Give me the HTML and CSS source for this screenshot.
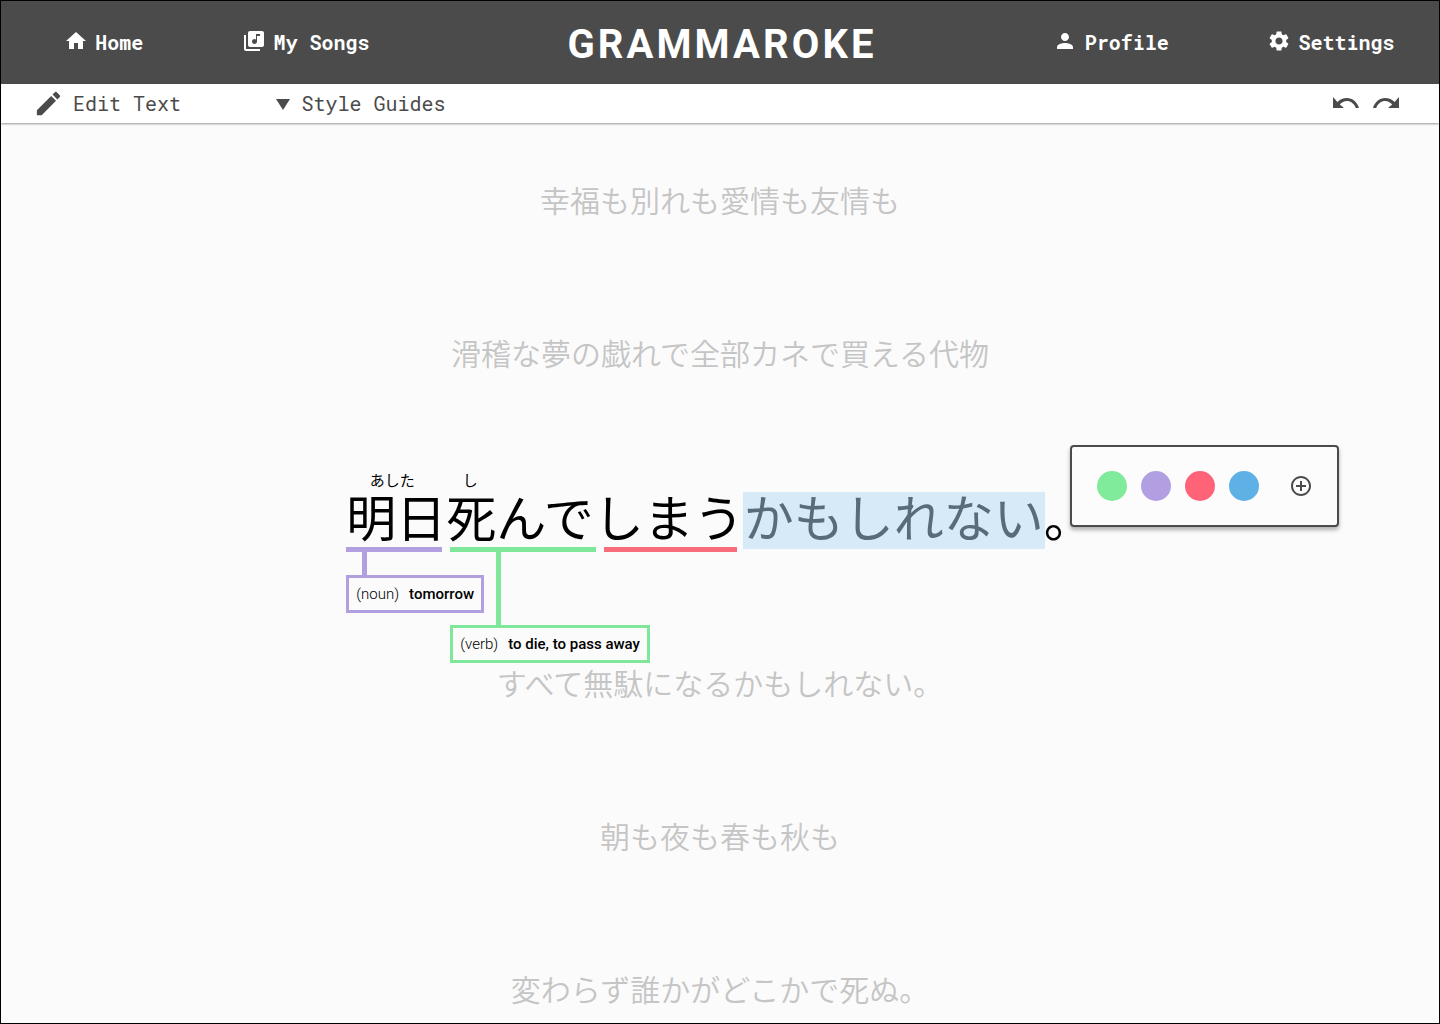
FILE: index.html
```html
<!DOCTYPE html>
<html lang="ja">
<head>
<meta charset="utf-8">
<title>Grammaroke</title>
<link rel="stylesheet" href="styles.css">
</head>
<body>
<header class="topbar">
  <nav class="nav nav-left">
    <a class="nav-item"><svg class="icon" viewBox="0 0 24 24"><path d="M10 20v-6h4v6h5v-8h3L12 3 2 12h3v8z"/></svg><span>Home</span></a>
    <a class="nav-item"><svg class="icon" viewBox="0 0 24 24"><path d="M20 2H8c-1.1 0-2 .9-2 2v12c0 1.1.9 2 2 2h12c1.1 0 2-.9 2-2V4c0-1.1-.9-2-2-2zm-2 5h-3v5.5c0 1.38-1.12 2.5-2.5 2.5S10 13.88 10 12.5s1.12-2.5 2.5-2.5c.57 0 1.08.19 1.5.51V5h4v2zM4 6H2v14c0 1.1.9 2 2 2h14v-2H4V6z"/></svg><span>My Songs</span></a>
  </nav>
  <h1 class="brand">GRAMMAROKE</h1>
  <nav class="nav nav-right">
    <a class="nav-item"><svg class="icon" viewBox="0 0 24 24"><path d="M12 12c2.21 0 4-1.79 4-4s-1.79-4-4-4-4 1.79-4 4 1.79 4 4 4zm0 2c-2.67 0-8 1.34-8 4v2h16v-2c0-2.66-5.33-4-8-4z"/></svg><span>Profile</span></a>
    <a class="nav-item"><svg class="icon" viewBox="0 0 24 24"><path d="M19.14 12.94c.04-.3.06-.61.06-.94 0-.32-.02-.64-.07-.94l2.03-1.58c.18-.14.23-.41.12-.61l-1.92-3.32c-.12-.22-.37-.29-.59-.22l-2.39.96c-.5-.38-1.03-.7-1.62-.94l-.36-2.54c-.04-.24-.24-.41-.48-.41h-3.84c-.24 0-.43.17-.47.41l-.36 2.54c-.59.24-1.13.57-1.62.94l-2.39-.96c-.22-.08-.47 0-.59.22L2.74 8.87c-.12.21-.08.47.12.61l2.03 1.58c-.05.3-.09.63-.09.94s.02.64.07.94l-2.03 1.58c-.18.14-.23.41-.12.61l1.92 3.32c.12.22.37.29.59.22l2.39-.96c.5.38 1.03.7 1.62.94l.36 2.54c.05.24.24.41.48.41h3.84c.24 0 .44-.17.47-.41l.36-2.54c.59-.24 1.13-.56 1.62-.94l2.39.96c.22.08.47 0 .59-.22l1.92-3.32c.12-.22.07-.47-.12-.61l-2.01-1.58zM12 15.6c-1.98 0-3.6-1.62-3.6-3.6s1.62-3.6 3.6-3.6 3.6 1.62 3.6 3.6-1.62 3.6-3.6 3.6z"/></svg><span>Settings</span></a>
  </nav>
</header>
<div class="toolbar">
  <button class="tool"><svg class="pencil" viewBox="0 0 24 24"><path d="M3 17.25V21h3.75L17.81 9.94l-3.75-3.75L3 17.25zM20.71 7.04c.39-.39.39-1.02 0-1.41l-2.34-2.34c-.39-.39-1.02-.39-1.41 0l-1.83 1.83 3.75 3.75 1.83-1.83z"/></svg><span>Edit Text</span></button>
  <button class="tool tool-menu"><svg class="caret" viewBox="0 0 14 11"><path d="M0 0h14L7 11z"/></svg><span>Style Guides</span></button>
  <div class="history">
    <svg class="arrow" viewBox="0 0 26 11"><path d="M0 0v11h11L6.8 7.4C8.8 5.3 11.2 4 13.8 4c4 0 7.5 2.7 9 7H26C24.3 5 19.5 1 13.8 1 10.2 1 7 2.5 4.4 4.9z"/></svg>
    <svg class="arrow flip" viewBox="0 0 26 11"><path d="M0 0v11h11L6.8 7.4C8.8 5.3 11.2 4 13.8 4c4 0 7.5 2.7 9 7H26C24.3 5 19.5 1 13.8 1 10.2 1 7 2.5 4.4 4.9z"/></svg>
  </div>
</div>
<main class="lyrics">
  <p class="line">幸福も別れも愛情も友情も</p>
  <p class="line">滑稽な夢の戯れで全部カネで買える代物</p>
  <div class="line current">
    <span class="word noun"><span class="furigana">あした</span>明日<span class="gloss"><span class="pos">(noun)</span><b>tomorrow</b></span></span><span class="word verb"><span class="furigana">し</span>死んで<span class="gloss"><span class="pos">(verb)</span><b>to die, to pass away</b></span></span><span class="word aux">しまう</span><span class="word selected">かもしれない</span><span class="word">。</span>
    <div class="palette">
      <i class="swatch green"></i><i class="swatch purple"></i><i class="swatch red"></i><i class="swatch blue"></i>
      <svg class="add" viewBox="0 0 24 24"><path d="M13 7h-2v4H7v2h4v4h2v-4h4v-2h-4V7zm-1-5C6.48 2 2 6.48 2 12s4.48 10 10 10 10-4.48 10-10S17.52 2 12 2zm0 18c-4.41 0-8-3.59-8-8s3.59-8 8-8 8 3.59 8 8-3.59 8-8 8z"/></svg>
    </div>
  </div>
  <p class="line">すべて無駄になるかもしれない。</p>
  <p class="line">朝も夜も春も秋も</p>
  <p class="line">変わらず誰かがどこかで死ぬ。</p>
</main>
</body>
</html>
```
FILE: styles.css
```css
* { box-sizing: border-box; }
body {
  margin: 0;
  height: 1024px;
  border: 1px solid #000;
  background: #fbfbfb;
  display: flex;
  flex-direction: column;
  overflow: hidden;
  font-family: Roboto, "Noto Sans CJK JP", sans-serif;
}
svg { display: block; flex: none; fill: currentColor; }

.topbar {
  flex: none;
  height: 83px;
  background: #4b4b4b;
  color: #fff;
  display: grid;
  grid-template-columns: 1fr auto 1fr;
  align-items: center;
}
.nav { display: flex; padding-bottom: 2px; }
.nav-left { padding-left: 63px; gap: 99px; }
.nav-right { padding-right: 44.5px; gap: 98.5px; justify-content: flex-end; }
.nav-item {
  display: flex;
  align-items: center;
  gap: 7.3px;
  font: bold 20px/24px "Roboto Mono", "DejaVu Sans Mono", monospace;
  white-space: pre;
}
.icon { width: 24px; height: 24px; margin-top: -1px; }
.brand { margin: 4px 0 0; padding-left: 4px; font-size: 40px; line-height: 48px; font-weight: 700; letter-spacing: 3.1px; }

.toolbar {
  flex: none;
  height: 39px;
  background: #fff;
  color: #4b4b4b;
  display: flex;
  align-items: center;
  padding: 0 40px 2px 32px;
  box-shadow: 0 1px 2px rgba(0, 0, 0, .4);
  z-index: 1;
}
.tool {
  display: flex;
  align-items: center;
  gap: 9px;
  padding: 0;
  border: 0;
  background: none;
  color: inherit;
  font: 20px/24px "Roboto Mono", "DejaVu Sans Mono", monospace;
}
.tool-menu { margin-left: 95px; gap: 11.5px; }
.pencil { width: 31px; height: 31px; margin: 1px 0 -1px; }
.caret { width: 14px; height: 11px; margin-top: 3px; }
.history { margin-left: auto; display: flex; gap: 14px; }
.arrow { width: 26px; height: 11px; }
.flip { transform: scaleX(-1); }

.lyrics { flex: 1; min-height: 0; }
.line {
  height: 153px;
  margin: 0;
  padding-bottom: 2px;
  display: flex;
  align-items: center;
  justify-content: center;
  font: 350 30px/44px "Noto Sans CJK JP", sans-serif;
  color: #c5c5c5;
}
.current { position: relative; height: 177px; padding-bottom: 4px; font-size: 50px; font-weight: 400; line-height: 53px; color: #000; }
.word { position: relative; }

.furigana {
  position: absolute;
  top: -17px;
  left: -4px;
  right: 4px;
  text-align: center;
  font-size: 15px;
  line-height: 16px;
}
.verb .furigana { left: -1px; right: auto; width: 50px; }

/* part-of-speech underline */
.word::after { content: ""; position: absolute; top: 58px; height: 5px; background: var(--mark); }
.noun { --mark: #b19fe0; }
.verb { --mark: #7fe79a; }
.aux { --mark: #f76b7b; z-index: 1; }
.noun::after { left: 0; width: 96px; }
.verb::after { left: 4px; width: 146px; }
.aux::after { left: 10px; width: 133px; }
.selected { color: #586d7b; z-index: 0; }
.selected::before { content: ""; position: absolute; z-index: -1; inset: 3px -1px -7px -1px; background: #d6eaf8; }

.gloss {
  position: absolute;
  left: 0;
  top: 86px;
  z-index: 1;
  height: 38px;
  padding: 0 7px;
  border: 3px solid var(--mark);
  display: flex;
  align-items: center;
  gap: 10px;
  white-space: nowrap;
  font: 300 15px/18px Roboto, sans-serif;
}
.gloss b { font-weight: 500; }
.gloss::before { content: ""; position: absolute; left: 13px; bottom: 100%; width: 5px; height: 28px; background: var(--mark); }
.verb .gloss { left: 4px; top: 136px; }
.verb .gloss::before { left: 43px; height: 78px; }

.palette {
  position: absolute;
  left: 1069px;
  top: 16px;
  width: 269px;
  height: 82px;
  padding: 0 24px 0 25px;
  border: 2px solid #4b4b4b;
  border-radius: 4px;
  background: #fcfcfc;
  box-shadow: 0 3px 4px rgba(0, 0, 0, .3);
  color: #4b4b4b;
  display: flex;
  align-items: center;
  gap: 14px;
}
.swatch { width: 30px; height: 30px; border-radius: 50%; }
.green { background: #7feb9b; }
.purple { background: #b19fe2; }
.red { background: #fe6378; }
.blue { background: #5eb0e5; }
.add { width: 24px; height: 24px; margin-left: auto; }
```
